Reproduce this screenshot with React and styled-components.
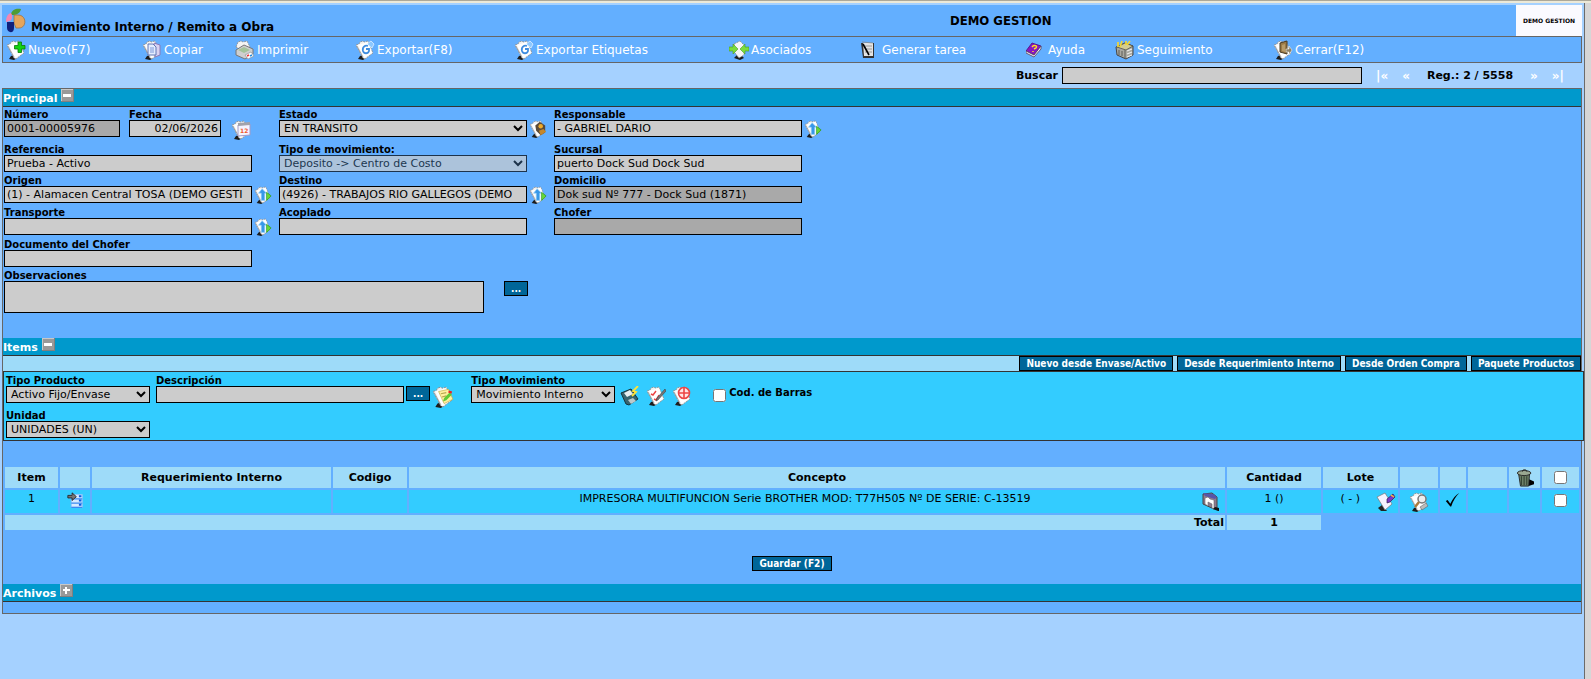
import React from "react";
import styled, { createGlobalStyle } from "styled-components";

const GlobalStyle = createGlobalStyle`
  * {
    box-sizing: border-box;
  }
  body {
    margin: 0;
    background: #d6d6d6;
    color: #000;
    font-family: Verdana, "DejaVu Sans", sans-serif;
    font-size: 11px;
  }
  input,
  select,
  textarea,
  button {
    font-family: inherit;
    margin: 0;
  }
`;

const Frame = styled.div`
  min-height: calc(100vh - 3px);
  margin-right: 6px;
  padding: 2px 2px 0;
  background: #a5d1ff;
  border-right: 1px solid #6b6b6b;
`;

const TopEdge = styled.div`
  height: 3px;
  background: #ece9d8;
  border-top: 1px solid #aca899;
`;

const Header = styled.header`
  display: grid;
  grid-template-columns: 948px 1fr auto;
  height: 31px;
  background: #63afff;
`;

const Brand = styled.div`
  display: flex;
  align-items: flex-end;
  gap: 5px;
  padding-left: 4px;
  svg {
    align-self: center;
  }
`;

const Title = styled.h1`
  margin: 0;
  font-size: 12px;
  line-height: 18px;
`;

const Company = styled.div`
  font-family: Tahoma, "DejaVu Sans Condensed", "DejaVu Sans", sans-serif;
  font-size: 13px;
  font-weight: bold;
  line-height: 31px;
`;

const LogoBox = styled.div`
  width: 66px;
  background: #fafaff;
  font-size: 6px;
  font-weight: bold;
  line-height: 31px;
  text-align: center;
  white-space: nowrap;
`;

const Menu = styled.nav`
  display: grid;
  grid-template-columns: 136fr 93fr 120fr 159fr 215fr 131fr 166fr 89fr 158fr 308fr;
  align-items: center;
  height: 27px;
  padding-left: 3px;
  background: #63afff;
  border: 1px solid #666;
`;

const MenuLink = styled.a`
  display: flex;
  align-items: center;
  gap: 2px;
  color: #fff;
  font-size: 12px;
  text-decoration: none;
  white-space: nowrap;
`;

const SearchBar = styled.div`
  display: flex;
  justify-content: flex-end;
  align-items: center;
  gap: 4px;
  height: 25px;
  padding-right: 18px;
  font-weight: bold;
`;

const Pager = styled.div`
  display: flex;
  align-items: center;
  gap: 14px;
  margin-left: 10px;
  a {
    color: #fff;
    font-size: 12px;
    text-decoration: none;
  }
  span {
    padding: 0 3px;
  }
`;

const Panel = styled.main`
  background: #63afff;
  border: 1px solid #666;
`;

const SectionTitle = styled.h2`
  display: flex;
  align-items: flex-start;
  gap: 4px;
  height: 18px;
  margin: 0;
  background: #0099cc;
  border-bottom: 1px solid #333;
  color: #fff;
  font-size: 11px;
  line-height: 19px;
`;

const Toggle = styled.button`
  display: block;
  padding: 0;
  border: 0;
  background: none;
  line-height: 0;
`;

const Fields = styled.div`
  display: grid;
  row-gap: 1px;
  padding: 0 1px;
  margin-bottom: 25px;
`;

const FieldRow = styled.div`
  display: grid;
  grid-template-columns: repeat(3, 275px);
`;

const Pair = styled.div`
  display: flex;
  gap: 9px;
`;

const Label = styled.label`
  display: block;
  height: 13px;
  font-size: 10px;
  font-weight: bold;
  line-height: 15px;
  white-space: nowrap;
`;

const Line = styled.div`
  display: flex;
  align-items: flex-start;
  gap: ${({ $gap }) => $gap || 2}px;
`;

const TextInput = styled.input`
  width: ${({ $width }) => $width || 248}px;
  height: 17px;
  padding: 0 2px;
  background: ${({ readOnly }) => (readOnly ? "#a9a9a9" : "#ccc")};
  border: 1px solid #000;
  color: #000;
  font-size: 11px;
  text-align: ${({ $align }) => $align || "left"};
`;

const Select = styled.select`
  width: ${({ $width }) => $width || 248}px;
  height: 17px;
  padding: 0;
  background: #ccc;
  border: 1px solid #000;
  border-radius: 0;
  color: #000;
  font-size: 11px;
`;

const TextArea = styled.textarea`
  width: 480px;
  height: 32px;
  background: #ccc;
  border: 1px solid #000;
  resize: none;
`;

const Button = styled.button`
  min-width: 24px;
  height: 15px;
  padding: 0 6px;
  background: #006699;
  border: 1px solid #000;
  color: #fff;
  font-family: Tahoma, "DejaVu Sans Condensed", "DejaVu Sans", sans-serif;
  font-size: 10px;
  font-weight: bold;
  line-height: 12px;
  white-space: nowrap;
`;

const IconButton = styled.button`
  display: flex;
  width: ${({ $width }) => $width || 20}px;
  height: ${({ $height }) => $height || 18}px;
  padding: 0;
  background: none;
  border: 0;
`;

const Actions = styled.div`
  display: flex;
  justify-content: flex-end;
  gap: 4px;
  background: #9edbf9;
`;

/* runs a little past the panel, over its right border */
const ItemForm = styled.div`
  position: relative;
  margin-right: -3px;
  padding: 1px 2px 2px;
  background: #33ccff;
  border: 1px solid #333;
`;

const ItemRow = styled.div`
  display: flex;
  align-items: flex-start;
  min-height: ${({ $height }) => $height}px;
`;

const ItemField = styled.div`
  margin-right: ${({ $after }) => $after || 0}px;
`;

const Tools = styled.div`
  display: flex;
  gap: 6px;
  padding-top: 13px;
  margin-right: 21px;
`;

const Check = styled.input`
  display: inline-block;
  width: 13px;
  height: 13px;
  vertical-align: middle;
`;

const BarcodeLine = styled.div`
  display: flex;
  gap: 3px;
  padding-top: 12px;
  input {
    margin-top: 4px;
  }
`;

const ItemsTable = styled.table`
  width: 100%;
  margin: 24px 0;
  table-layout: fixed;
  border-collapse: separate;
  border-spacing: 2px;
  text-align: center;
  th,
  td {
    padding: 0 1px;
    background: #9edbf9;
    line-height: 14px;
  }
  th {
    height: 21px;
  }
  tbody td {
    height: 23px;
    padding-top: 2px;
    background: #33ccff;
    vertical-align: top;
  }
  tbody input {
    margin-top: 2px;
  }
  tfoot td {
    height: 15px;
    font-weight: bold;
  }
  tfoot td:first-child {
    text-align: right;
  }
  tfoot td:last-child {
    background: none;
  }
  svg {
    display: inline-block;
    vertical-align: top;
  }
`;

const CellLine = styled.div`
  display: flex;
  justify-content: flex-end;
  gap: ${({ $gap }) => $gap || 0}px;
  padding-right: ${({ $gap }) => ($gap ? 1 : 4)}px;
  span {
    flex: ${({ $gap }) => ($gap ? "none" : 1)};
  }
`;

const SaveLine = styled.div`
  display: flex;
  justify-content: center;
  margin-bottom: 13px;
`;

const PanelEnd = styled.div`
  height: 11px;
`;

/* tilted sheet shared by most of the icons */
const Sheet = () => (
  <>
    <path d="M3 19l2-3 3-1 3 3-3 2z" fill="#1c1c1c" />
    <path d="M1 5l3-1 1-2 3-1 1 1 4-1 5 12-8 6-2-1z" fill="#f2f2f2" stroke="#8a8a8a" strokeWidth="0.800" strokeDasharray="2 1" />
    <path d="M3 5l10-3 4 11-8 5z" fill="#fff" />
    <path d="M2 6l6 11" stroke="#999" strokeWidth="0.700" />
  </>
);

const drawings = {
  nuevo: (
    <>
      <Sheet />
      <path d="M12 2h3.500v3.500H19V9h-3.500v3.500H12V9H8.500V5.500H12z" fill="#12d312" stroke="#087a08" strokeWidth="0.800" />
    </>
  ),
  copiar: (
    <>
      <Sheet />
      <path d="M12 3l6 2v10l-5 2z" fill="#d9d3f2" stroke="#8a7ab8" />
      <path d="M6 4h5l3 3v8H6z" fill="#e4edff" stroke="#6076b4" />
      <path d="M8 8h4M8 10h4M8 12h4" stroke="#7c98d8" />
    </>
  ),
  imprimir: (
    <>
      <path d="M1 7l2-5 3-1 2 1 4-1 3 6-7 4z" fill="#f4f4f4" stroke="#888" strokeWidth="0.800" strokeDasharray="2 1" />
      <path d="M1 10l8-5 9 4v5l-8 5-9-4z" fill="#cfcfcf" stroke="#777" />
      <path d="M3 10l6-3 6 3-6 3z" fill="#a4c39a" />
      <path d="M10 15l6-3 3 4-6 3z" fill="#fff" stroke="#888" strokeWidth="0.600" />
      <path d="M12 16l2-1" stroke="#e33" strokeWidth="1.500" />
      <path d="M15 16l2-1" stroke="#28d" strokeWidth="1.500" />
    </>
  ),
  exportar: (
    <>
      <Sheet />
      <path d="M13 6c-3-1-6 1-5 5 1 3 5 3 6 0V9h-3" fill="none" stroke="#3f8de0" strokeWidth="1.800" />
      <path d="M12 4l4-3 3 3-2 4z" fill="#8cc8ff" stroke="#fff" strokeWidth="0.600" />
    </>
  ),
  asociados: (
    <>
      <path d="M5 18l5-5 5 5-4 2z" fill="#1c1c1c" />
      <path d="M5 4l6-3 5 5-1 9-5 3-4-5z" fill="#f6f6f6" stroke="#888" strokeWidth="0.800" strokeDasharray="2 1" />
      <path d="M0 7h4V4l5 5-5 5v-3H0z" fill="#7bdc3c" stroke="#4a9c22" strokeWidth="0.600" />
      <path d="M20 7h-4V4l-5 5 5 5v-3h4z" fill="#7bdc3c" stroke="#4a9c22" strokeWidth="0.600" />
    </>
  ),
  tarea: (
    <>
      <path d="M1 3h13v15H3z" fill="#333" />
      <path d="M3 3h10v13H4z" fill="#e3e3e3" />
      <path d="M2 2l11 1M5 6h7M5 9h7M5 12h7" stroke="#888" strokeWidth="0.800" />
      <path d="M3 4l6 11" stroke="#000" strokeWidth="1.600" />
    </>
  ),
  ayuda: (
    <>
      <path d="M0 11l6-8 9 3-7 9z" fill="#8a16c2" stroke="#4d0a78" strokeWidth="0.800" />
      <path d="M0 11l8 4 7-9v3l-7 8-8-4z" fill="#f1e6fa" stroke="#554455" strokeWidth="0.800" />
      <path d="M6 7c2-3 6-1 4 1l-2 1M7 11v1" stroke="#ffdf22" strokeWidth="1.500" fill="none" />
    </>
  ),
  seguimiento: (
    <>
      <path d="M1 7l9-4 8 3v9l-7 4-9-4z" fill="#a8a8a0" stroke="#444" />
      <path d="M2 7l9 3 7-4-8-3z" fill="#d2cc92" stroke="#444" strokeWidth="0.700" />
      <path d="M4 10v5M7 11v5M10 10v9" stroke="#5c5c58" />
      <path d="M12 11l5-2M12 14l5-2M12 17l5-2" stroke="#eee" strokeWidth="1.200" />
      <path d="M3 2v5M7 1L5 7M11 1v4M15 1l-3 4" stroke="#f2d633" strokeWidth="1.700" />
    </>
  ),
  cerrar: (
    <>
      <Sheet />
      <path d="M7 3l7-2v13l-7-2z" fill="#9b7a45" stroke="#493a22" />
      <path d="M9 5l3-1v8l-3-1z" fill="#b79b68" />
      <path d="M13 9h3V6l3 4-3 5v-3h-3z" fill="#8d8266" stroke="#fff" strokeWidth="0.500" />
    </>
  ),
  fecha: (
    <>
      <Sheet />
      <path d="M7 5l12-1v11L7 16z" fill="#f5f4ff" stroke="#a39bc8" />
      <path d="M7 3l12-1v3L7 6z" fill="#a2a2aa" />
      <text x="9" y="13" fill="#f0592c" fontSize="6" fontWeight="bold">12</text>
    </>
  ),
  estado: (
    <>
      <Sheet />
      <path d="M7 6l5-4 6 4v8l-5 3-5-5z" fill="#5a4a39" />
      <circle cx="13" cy="7" r="2.500" fill="#f0aa28" />
      <path d="M11 12l5-2 3 3-6 4z" fill="#c5872b" />
    </>
  ),
  subir: (
    <>
      <Sheet />
      <path d="M9 3l5 5h-2v8H8V8H5z" fill="#3898e8" stroke="#9cd2fa" strokeWidth="0.800" />
      <path d="M14 7l5 4-5 5z" fill="#68d839" stroke="#2b9b1d" strokeWidth="0.800" />
    </>
  ),
  nota: (
    <>
      <Sheet />
      <path d="M6 5l9-2 4 9-8 4z" fill="#fff0a0" stroke="#c4ad41" strokeWidth="0.600" />
      <path d="M8 7l5-1M9 10l4-1" stroke="#b7a750" />
      <path d="M16 6l-5 5-1 3 3-1 5-5z" fill="#62ca35" />
      <path d="M15 5l3 1" stroke="#e22" strokeWidth="2" />
    </>
  ),
  guardar: (
    <>
      <path d="M1 7l10-4 7 10-9 6-3-1z" fill="#38646e" stroke="#16343c" />
      <path d="M4 7l6-3 3 4-6 3z" fill="#e8eef0" />
      <path d="M8 14l5-2 3 3-5 3z" fill="#bccacc" />
      <path d="M18 0l-5 5 3 1-4 4" fill="none" stroke="#ffe238" strokeWidth="1.800" />
    </>
  ),
  editar: (
    <>
      <Sheet />
      <path d="M5 8l2 1 3-4M8 13l2 1 3-5" stroke="#ed4242" strokeWidth="1.400" fill="none" />
      <path d="M19 3l-8 9-1 3 2-1 8-9z" fill="#777" stroke="#333" strokeWidth="0.500" />
    </>
  ),
  cancelar: (
    <>
      <Sheet />
      <circle cx="12" cy="7" r="5.500" fill="#ffe6e6" stroke="#ed4545" strokeWidth="1.600" />
      <path d="M12 2v11M7 7h11" stroke="#ed4545" strokeWidth="1.600" />
    </>
  ),
  datos: (
    <>
      <path d="M5 3h13v15H5z" fill="#d7eaff" stroke="#8fc3fc" />
      <path d="M5 8h13M5 13h13M5 18h13" stroke="#3c8bf0" strokeWidth="1.500" />
      <path d="M14 5h3M14 10h3M14 15h3" stroke="#0c5be0" strokeWidth="2.500" />
      <path d="M1 4h5V1l5 4.500L6 10V7H1z" fill="#777" stroke="#222" />
    </>
  ),
  carpeta: (
    <>
      <path d="M3 2l9-1 5 4v11l-3 1L3 12z" fill="#8e7a8e" stroke="#444" />
      <path d="M3 1l10 1 4 3-2 2-10-3z" fill="#5756a8" />
      <path d="M5 6l3-1 2 2 4 1v9l-2-1v-4l-4-2v4l-3-2z" fill="#fff" stroke="#666" strokeWidth="0.600" />
      <path d="M13 17l5 2h1v-3l-4-1z" fill="#111" />
    </>
  ),
  lote: (
    <>
      <path d="M2 16l4-3 5 6H5z" fill="#222" />
      <path d="M1 5l8-4 7 11-7 6z" fill="#f5f3ff" stroke="#777" strokeWidth="0.700" />
      <path d="M17 2l-6 5v4l3-1 5-5z" fill="#7938c7" stroke="#312052" strokeWidth="0.700" />
      <path d="M15 3l3 2" stroke="#ffb432" strokeWidth="1.500" />
    </>
  ),
  ver: (
    <>
      <Sheet />
      <circle cx="13" cy="7" r="4" fill="#eee" stroke="#777" strokeWidth="1.500" />
      <path d="M10 10l-4 5" stroke="#a97b3d" strokeWidth="2.500" />
      <path d="M11 15l6-4 2 3-6 4z" fill="#bbb" stroke="#555" strokeWidth="0.500" />
    </>
  ),
  tilde: <path d="M2 10l2-1 3 4c3-6 6-10 10-12-4 4-7 9-9 15H7z" fill="#000" />,
  basura: (
    <>
      <path d="M14 11l6 3v3l-6 2z" fill="#000" />
      <path d="M3 6h12l-1 13H5z" fill="#6d8068" stroke="#222" />
      <path d="M6 8v10M9 8v10M12 8v10" stroke="#283428" />
      <ellipse cx="9" cy="4.500" rx="7.500" ry="2.800" fill="#9aa892" stroke="#222" />
      <path d="M7 3c0-3 5-3 5 0" stroke="#222" fill="none" />
    </>
  ),
};

const Icon = ({ name, size = 20 }) => (
  <svg width={size} height={size} viewBox="0 0 20 20" fill="none" aria-hidden="true">
    {drawings[name]}
  </svg>
);

const BrandMark = () => (
  <svg width="20" height="26" viewBox="0 0 20 26" aria-hidden="true">
    <path d="M5 6C6 1 11 0 15 1c-1 4-4 6-9 6z" fill="#4f9c35" />
    <path d="M5 5c2 3 1 7-1 8l-4 1c0-4 1-8 5-9z" fill="#f486b2" />
    <path d="M8 7h4c9 0 9 13 1 13h-3l-2-5z" fill="#e5a55c" stroke="#9c7445" strokeWidth="0.800" />
    <path d="M1 14h7v6c0 6-7 5-7 0z" fill="#10207c" />
  </svg>
);

const Sign = ({ plus }) => (
  <svg width="13" height="13" viewBox="0 0 13 13" aria-hidden="true">
    <path d="M0 0h13v13H0z" fill="#808080" />
    <path d="M0 0h12v12H0z" fill="#c8c8c8" />
    <path d="M1 1h11v11H1z" fill="#999" />
    <path d={plus ? "M3 5h7v2H3zM5 3h2v7H5z" : "M2 5h8v3H2z"} fill="#fff" />
  </svg>
);

const menuItems = [
  ["nuevo", "Nuevo(F7)"],
  ["copiar", "Copiar"],
  ["imprimir", "Imprimir"],
  ["exportar", "Exportar(F8)"],
  ["exportar", "Exportar Etiquetas"],
  ["asociados", "Asociados"],
  ["tarea", "Generar tarea"],
  ["ayuda", "Ayuda"],
  ["seguimiento", "Seguimiento"],
  ["cerrar", "Cerrar(F12)"],
];

const columnWidths = [53, 30, 239, 74, undefined, 94, 75, 38, 26, 39, 31, 37];

const Section = ({ title, plus }) => (
  <SectionTitle>
    {title}
    <Toggle type="button" aria-label={title}>
      <Sign plus={plus} />
    </Toggle>
  </SectionTitle>
);

const Field = ({ id, label, value = "", icon, ...rest }) => (
  <div>
    <Label htmlFor={id}>{label}</Label>
    <Line>
      <TextInput id={id} defaultValue={value} {...rest} />
      {icon && (
        <IconButton type="button" aria-label={label}>
          <Icon name={icon} size={18} />
        </IconButton>
      )}
    </Line>
  </div>
);

const SelectField = ({ id, label, value, icon, width, disabled }) => (
  <div>
    <Label htmlFor={id}>{label}</Label>
    <Line>
      <Select id={id} $width={width} disabled={disabled}>
        <option>{value}</option>
      </Select>
      {icon && (
        <IconButton type="button" aria-label={label}>
          <Icon name={icon} size={18} />
        </IconButton>
      )}
    </Line>
  </div>
);

const Principal = () => (
  <Fields>
    <FieldRow>
      <Pair>
        <Field id="numero" label="Número" value="0001-00005976" $width={116} readOnly />
        <div>
          <Label htmlFor="fecha">Fecha</Label>
          <Line $gap={10}>
            <TextInput id="fecha" defaultValue="02/06/2026" $width={92} $align="right" />
            <IconButton type="button" aria-label="Calendario" $height={21}>
              <Icon name="fecha" />
            </IconButton>
          </Line>
        </div>
      </Pair>
      <SelectField id="estado" label="Estado" value="EN TRANSITO" icon="estado" />
      <Field id="responsable" label="Responsable" value="- GABRIEL DARIO" icon="subir" />
    </FieldRow>
    <FieldRow>
      <Field id="referencia" label="Referencia" value="Prueba - Activo" />
      <SelectField id="tipo" label="Tipo de movimiento:" value="Deposito -> Centro de Costo" disabled />
      <Field id="sucursal" label="Sucursal" value="puerto Dock Sud Dock Sud" />
    </FieldRow>
    <FieldRow>
      <Field id="origen" label="Origen" value="(1) - Alamacen Central TOSA (DEMO GESTI" icon="subir" />
      <Field id="destino" label="Destino" value="(4926) - TRABAJOS RIO GALLEGOS (DEMO" icon="subir" />
      <Field id="domicilio" label="Domicilio" value="Dok sud Nº 777 - Dock Sud (1871)" readOnly />
    </FieldRow>
    <FieldRow>
      <Field id="transporte" label="Transporte" icon="subir" />
      <Field id="acoplado" label="Acoplado" />
      <Field id="chofer" label="Chofer" readOnly />
    </FieldRow>
    <FieldRow>
      <Field id="documento" label="Documento del Chofer" />
    </FieldRow>
    <div>
      <Label htmlFor="observaciones">Observaciones</Label>
      <Line $gap={20}>
        <TextArea id="observaciones" />
        <Button type="button">...</Button>
      </Line>
    </div>
  </Fields>
);

const NewItem = () => (
  <ItemForm>
    <ItemRow $height={35}>
      <ItemField $after={6}>
        <SelectField id="producto" label="Tipo Producto" value="Activo Fijo/Envase" width={144} />
      </ItemField>
      <ItemField $after={12}>
        <Label htmlFor="descripcion">Descripción</Label>
        <Line>
          <TextInput id="descripcion" />
          <Button type="button">...</Button>
          <IconButton type="button" aria-label="Nota" $width={27} $height={20}>
            <Icon name="nota" size={22} />
          </IconButton>
        </Line>
      </ItemField>
      <ItemField $after={5}>
        <SelectField id="movimiento" label="Tipo Movimiento" value="Movimiento Interno" width={144} />
      </ItemField>
      <Tools>
        <IconButton type="button" aria-label="Guardar item">
          <Icon name="guardar" />
        </IconButton>
        <IconButton type="button" aria-label="Editar item">
          <Icon name="editar" />
        </IconButton>
        <IconButton type="button" aria-label="Cancelar item">
          <Icon name="cancelar" />
        </IconButton>
      </Tools>
      <BarcodeLine>
        <Check id="barras" type="checkbox" />
        <Label htmlFor="barras">Cod. de Barras</Label>
      </BarcodeLine>
    </ItemRow>
    <ItemRow $height={30}>
      <SelectField id="unidad" label="Unidad" value="UNIDADES (UN)" width={144} />
    </ItemRow>
  </ItemForm>
);

const Items = () => (
  <ItemsTable>
    <colgroup>
      {columnWidths.map((width, i) => (
        <col key={i} width={width} />
      ))}
    </colgroup>
    <thead>
      <tr>
        <th>Item</th>
        <th />
        <th>Requerimiento Interno</th>
        <th>Codigo</th>
        <th>Concepto</th>
        <th>Cantidad</th>
        <th>Lote</th>
        <th />
        <th />
        <th />
        <th>
          <Icon name="basura" size={18} />
        </th>
        <th>
          <Check type="checkbox" aria-label="Seleccionar todos" />
        </th>
      </tr>
    </thead>
    <tbody>
      <tr>
        <td>1</td>
        <td>
          <Icon name="datos" size={17} />
        </td>
        <td />
        <td />
        <td>
          <CellLine>
            <span>IMPRESORA MULTIFUNCION Serie BROTHER MOD: T77H505 Nº DE SERIE: C-13519</span>
            <Icon name="carpeta" />
          </CellLine>
        </td>
        <td>1 ()</td>
        <td>
          <CellLine $gap={16}>
            <span>( - )</span>
            <Icon name="lote" />
          </CellLine>
        </td>
        <td>
          <Icon name="ver" />
        </td>
        <td>
          <Icon name="tilde" size={18} />
        </td>
        <td />
        <td />
        <td>
          <Check type="checkbox" aria-label="Seleccionar item 1" />
        </td>
      </tr>
    </tbody>
    <tfoot>
      <tr>
        <td colSpan={5}>Total</td>
        <td>1</td>
        <td colSpan={6} />
      </tr>
    </tfoot>
  </ItemsTable>
);

const App = () => (
  <>
    <GlobalStyle />
    <TopEdge />
    <Frame>
      <Header>
        <Brand>
          <BrandMark />
          <Title>Movimiento Interno / Remito a Obra</Title>
        </Brand>
        <Company>DEMO GESTION</Company>
        <LogoBox>DEMO GESTION</LogoBox>
      </Header>
      <Menu>
        {menuItems.map(([icon, text]) => (
          <MenuLink key={text} href="#">
            <Icon name={icon} />
            {text}
          </MenuLink>
        ))}
      </Menu>
      <SearchBar>
        <label htmlFor="buscar">Buscar</label>
        <TextInput id="buscar" $width={300} />
        <Pager>
          <a href="#">|«</a>
          <a href="#">«</a>
          <span>Reg.: 2 / 5558</span>
          <a href="#">»</a>
          <a href="#">»|</a>
        </Pager>
      </SearchBar>
      <Panel>
        <Section title="Principal" />
        <Principal />
        <Section title="Items" />
        <Actions>
          <Button type="button">Nuevo desde Envase/Activo</Button>
          <Button type="button">Desde Requerimiento Interno</Button>
          <Button type="button">Desde Orden Compra</Button>
          <Button type="button">Paquete Productos</Button>
        </Actions>
        <NewItem />
        <Items />
        <SaveLine>
          <Button type="button">Guardar (F2)</Button>
        </SaveLine>
        <Section title="Archivos" plus />
        <PanelEnd />
      </Panel>
    </Frame>
  </>
);

export default App;
